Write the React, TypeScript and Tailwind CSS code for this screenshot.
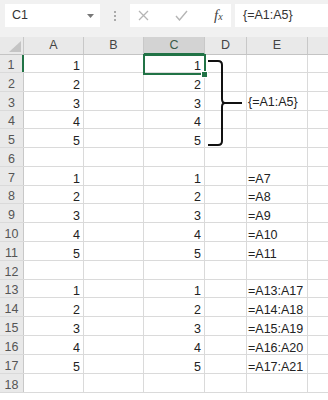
import React from "react";

const cols = [
  { key: "A", w: 60 },
  { key: "B", w: 60 },
  { key: "C", w: 61 },
  { key: "D", w: 42 },
  { key: "E", w: 61 },
];

const rowHeights = [18, 19, 19, 18, 19, 19, 19, 18, 19, 19, 19, 19, 18, 19, 19, 19, 19, 19];

const data: Record<number, { A?: string; C?: string; E?: string }> = {
  1: { A: "1", C: "1" },
  2: { A: "2", C: "2" },
  3: { A: "3", C: "3" },
  4: { A: "4", C: "4" },
  5: { A: "5", C: "5" },
  7: { A: "1", C: "1", E: "=A7" },
  8: { A: "2", C: "2", E: "=A8" },
  9: { A: "3", C: "3", E: "=A9" },
  10: { A: "4", C: "4", E: "=A10" },
  11: { A: "5", C: "5", E: "=A11" },
  13: { A: "1", C: "1", E: "=A13:A17" },
  14: { A: "2", C: "2", E: "=A14:A18" },
  15: { A: "3", C: "3", E: "=A15:A19" },
  16: { A: "4", C: "4", E: "=A16:A20" },
  17: { A: "5", C: "5", E: "=A17:A21" },
};

const font = { fontFamily: '"Liberation Sans", Arial, sans-serif' };

export default function App() {
  return (
    <div className="w-[328px] h-[400px] overflow-hidden bg-white text-[12.5px] text-[#222]" style={font}>
      {/* Formula bar */}
      <div className="h-[37px] bg-[#f1f1f1] flex items-start pt-[4px] pl-[5px]">
        <div className="w-[95px] h-[23px] bg-white flex items-center justify-between pl-[7px] pr-[6px] text-[#333]">
          <span>C1</span>
          <svg width="7" height="4" viewBox="0 0 7 4">
            <path d="M0 0 H7 L3.5 4 Z" fill="#777" />
          </svg>
        </div>
        <div className="w-[30px] h-[23px] flex flex-col items-center justify-center gap-[2px]">
          <div className="w-[2px] h-[2px] bg-[#aaa]" />
          <div className="w-[2px] h-[2px] bg-[#aaa]" />
          <div className="w-[2px] h-[2px] bg-[#aaa]" />
        </div>
        <div className="w-[101px] h-[23px] bg-white flex items-center">
          <div className="w-[26px] flex justify-center ml-[0px]">
            <svg width="11" height="11" viewBox="0 0 11 11">
              <path d="M1 1 L10 10 M10 1 L1 10" stroke="#b5b5b5" strokeWidth="1.3" />
            </svg>
          </div>
          <div className="w-[22px] flex justify-center ml-[14px]">
            <svg width="13" height="11" viewBox="0 0 13 11">
              <path d="M1 6 L4.5 10 L12 1" stroke="#b5b5b5" strokeWidth="1.4" fill="none" />
            </svg>
          </div>
          <div
            className="ml-[22px] text-[#444] italic leading-none"
            style={{ fontFamily: '"Liberation Serif", "Times New Roman", serif' }}
          >
            <span className="text-[15px]">f</span>
            <span className="text-[10px]">x</span>
          </div>
        </div>
        <div className="ml-[4px] flex-1 h-[23px] bg-white flex items-center pl-[8px] text-[#333]">
          {"{=A1:A5}"}
        </div>
      </div>

      {/* Grid */}
      <div className="relative">
        {/* header row */}
        <div className="flex h-[18px] bg-[#e9e9e9] border-b border-[#c4c4c4]">
          <div className="w-[24px] shrink-0 relative border-r border-[#c8c8c8]">
            <svg className="absolute right-[2px] bottom-[2px]" width="12" height="11" viewBox="0 0 12 11">
              <path d="M12 0 V11 H0 Z" fill="#c4c4c4" />
            </svg>
          </div>
          {cols.map((c) => (
            <div
              key={c.key}
              style={{ width: c.w }}
              className={`shrink-0 flex items-center justify-center border-r border-[#c8c8c8] ${
                c.key === "C" ? "bg-[#d3d3d3] text-[#3a5a48] border-b-2 border-b-[#217346] -mb-[1px]" : "text-[#444]"
              }`}
            >
              {c.key}
            </div>
          ))}
          <div className="flex-1" />
        </div>

        {rowHeights.map((h, i) => {
          const r = i + 1;
          const d = data[r] || {};
          return (
            <div key={r} className="flex border-b border-[#dadada]" style={{ height: h }}>
              <div
                className={`w-[24px] shrink-0 flex items-end justify-center text-[#555] bg-[#e9e9e9] border-r ${
                  r === 1 ? "bg-[#d3d3d3] border-r-2 border-r-[#217346] text-[#3a5a48]" : "border-[#c8c8c8]"
                }`}
              >
                <span className="leading-[13px]">{r}</span>
              </div>
              {cols.map((c) => {
                const v = (d as Record<string, string | undefined>)[c.key];
                const right = c.key !== "E";
                return (
                  <div
                    key={c.key}
                    style={{ width: c.w }}
                    className={`shrink-0 flex items-end border-r border-[#dadada] ${
                      right ? "justify-end pr-[3px]" : "justify-start pl-[1px]"
                    }`}
                  >
                    <span className="leading-[12px]">{v ?? ""}</span>
                  </div>
                );
              })}
              <div className="flex-1" />
            </div>
          );
        })}

        {/* selection overlay */}
        <div className="absolute left-[143px] top-[17px] w-[63px] h-[21px] border-2 border-[#217346]" />
        <div className="absolute left-[201px] top-[34px] w-[7px] h-[7px] bg-[#217346] border border-white" />

        {/* bracket + label */}
        <svg className="absolute left-0 top-0" width="328" height="200" viewBox="0 0 328 200" style={{ top: -37 }}>
          <path
            d="M208 61 H218 Q222 61 222 65 V99 Q222 103 225 103 H242 M225 103 Q222 103 222 107 V141 Q222 145 218 145 H208"
            stroke="#111"
            strokeWidth="2"
            fill="none"
          />
        </svg>
        <div className="absolute left-[248px] top-[58px] leading-[14px]">{"{=A1:A5}"}</div>
      </div>
    </div>
  );
}
